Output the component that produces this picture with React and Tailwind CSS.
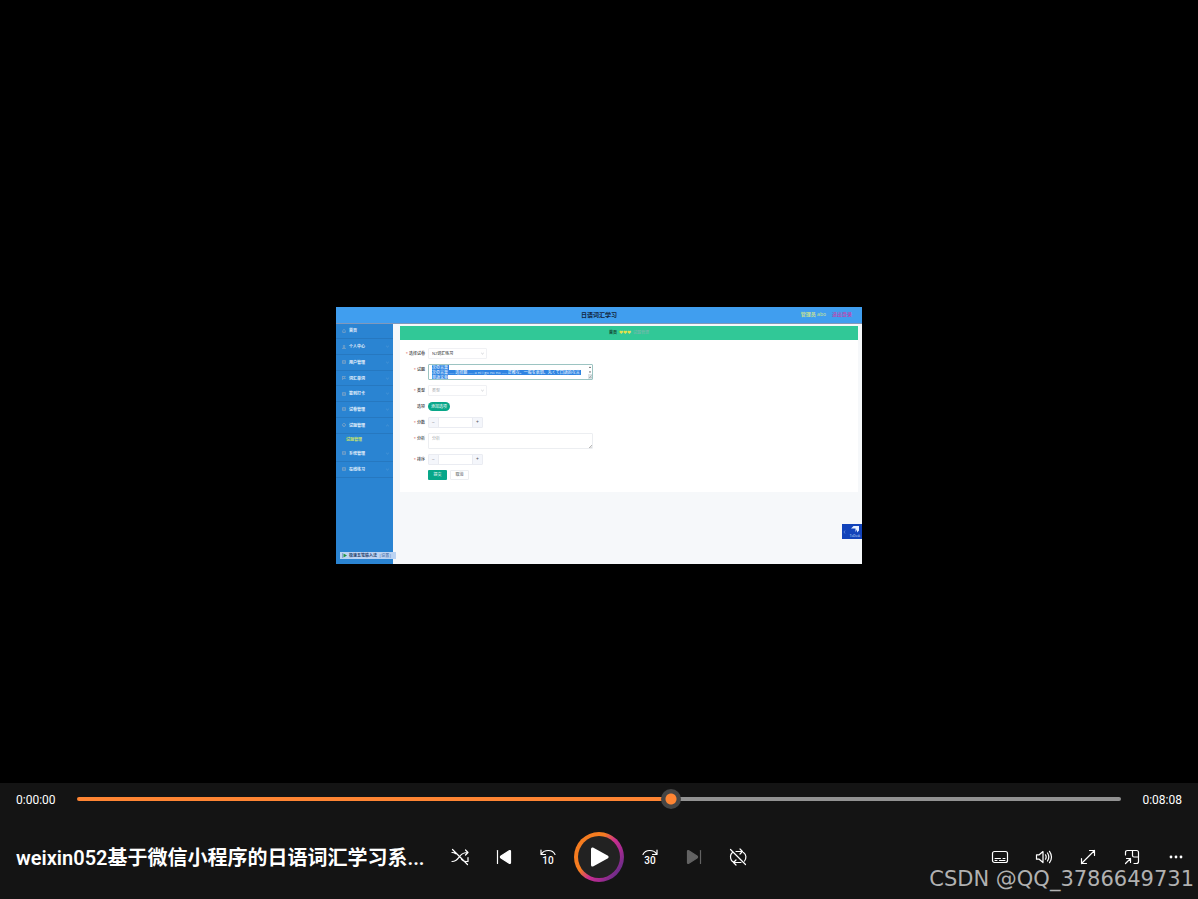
import { useEffect, useRef } from "react";

const menu = ["首页", "个人中心", "用户管理", "词汇单词", "签到打卡", "试卷管理", "试题管理"];
const menuTail = ["系统管理", "在线练习"];

function Icon({ children, className = "" }) {
  return (
    <svg
      width="20"
      height="20"
      viewBox="0 0 20 20"
      fill="none"
      stroke="currentColor"
      strokeWidth="1.2"
      strokeLinecap="round"
      strokeLinejoin="round"
      className={className}
      aria-hidden="true"
    >
      {children}
    </svg>
  );
}

function ControlButton({ label, children, disabled }) {
  return (
    <button
      type="button"
      aria-label={label}
      disabled={disabled}
      className="flex size-10 items-center justify-center text-white disabled:text-[#636363]"
    >
      <Icon>{children}</Icon>
    </button>
  );
}

function MenuRow({ label, glyph, arrow, up }) {
  return (
    <li className="flex flex-1 border-b border-[#2678c0]">
      <a href="#menu" className="flex flex-1 items-center gap-[3px] pr-1 pl-1.5">
        <svg width="4" height="4" viewBox="0 0 4 4" fill="none" stroke="#86a7c6" strokeWidth="0.7" aria-hidden="true">
          {glyph === 0 && <path d="M0.3 2 2 .4 3.7 2M.8 2v1.6h2.4V2" />}
          {glyph === 1 && <path d="M.4 3.6C.4 2.2 3.6 2.2 3.6 3.6ZM2 .4a.8.8 0 1 0 .01 0" />}
          {glyph === 2 && <path d="M.4.6h3.2v2.8H.4ZM.4 2h3.2" />}
          {glyph === 3 && <path d="M.6 0v4M.6.5h2.8L2.6 1.5l.8 1H.6" />}
          {glyph === 4 && <path d="M2 .4a1.6 1.6 0 1 0 .01 0M1.3 2l.6.6 1-1" />}
        </svg>
        <span className="flex-1">{label}</span>
        {arrow && (
          <svg width="3" height="3" viewBox="0 0 3 3" fill="none" stroke="#6ba6dc" strokeWidth="0.5" aria-hidden="true">
            <path d={up ? "M.3 2 1.5 1 2.7 2" : "M.3 1 1.5 2 2.7 1"} />
          </svg>
        )}
      </a>
    </li>
  );
}

function Field({ id, label, required = true, children }) {
  return (
    <div className="flex gap-[3px]">
      <label htmlFor={id} className="flex h-[11px] w-[25px] items-center justify-end gap-px font-medium text-[#2f3237]">
        {required && <span className="text-[#d9534f]">*</span>}
        {label}
      </label>
      {children}
    </div>
  );
}

function SelectBox({ id, value, muted }) {
  return (
    <div className="relative flex h-[11px] w-[59px]">
      <select
        id={id}
        className={
          "w-full appearance-none rounded-[1px] border border-[#f0f1f4] bg-white px-[3px] outline-none " +
          (muted ? "text-[#a4a7ad]" : "font-medium text-[#3a3d42]")
        }
      >
        <option>{value}</option>
      </select>
      <svg className="absolute top-1 right-[3px]" width="3" height="3" viewBox="0 0 3 3" fill="none" stroke="#b0b3ba" strokeWidth="0.6" aria-hidden="true">
        <path d="M.3 1 1.5 2 2.7 1" />
      </svg>
    </div>
  );
}

function NumberBox({ id }) {
  return (
    <div className="flex h-[11px] w-[55px] overflow-hidden rounded-[1px] border border-[#eaecf2]">
      <button type="button" aria-label="减少" className="w-2.5 border-r border-[#e9ebf1] bg-[#f4f6fb] text-[5px] leading-[8px] text-[#70747c]">
        −
      </button>
      <input id={id} className="min-w-0 flex-1 outline-none" />
      <button type="button" aria-label="增加" className="w-2.5 border-l border-[#e9ebf1] bg-[#f4f6fb] text-[5px] leading-[8px] text-[#50545c]">
        +
      </button>
    </div>
  );
}

function QuestionBox() {
  const ref = useRef(null);
  useEffect(() => {
    const el = ref.current;
    el.focus({ preventScroll: true });
    el.select();
    el.scrollTop = 0;
  }, []);
  return (
    <div className="relative flex h-4 w-[165px]">
      <textarea
        id="question"
        ref={ref}
        className="w-full resize-none overflow-hidden rounded-[1px] border border-[#9cc4c2] bg-white pr-2 pl-[3px] text-[4px] leading-[5px] font-medium text-[#2f86e0] outline-none selection:bg-[#2f84e2] selection:text-[#e4f1ff]"
        defaultValue={"次の言葉\n次の言葉 ---- 选择题 ---- a ni i go no no ---- 正確な、一般を表現、丸くて口語的な言\n単語文章"}
      />
      <svg className="absolute top-px right-px" width="4" height="14" viewBox="0 0 4 14" aria-hidden="true">
        <path d="M1 3 2 1.6 3 3ZM1 6.5 2 8 3 6.5Z" fill="#444" />
        <path d="M0 9h4v5H0Z" fill="#dce3e6" />
        <path d="M1 13 3.500 10.500M2.500 13l1-1" stroke="#777" strokeWidth=".5" />
      </svg>
    </div>
  );
}

function VideoFrame() {
  return (
    <div className="relative flex h-[257px] w-[526px] flex-col overflow-hidden bg-[#f6f8fa] text-[4px] leading-[5px]">
      <header className="grid h-4 grid-cols-3 items-center bg-[#409eef]">
        <h1 className="col-start-2 text-center text-[6px] leading-[8px] font-bold text-[#12253c]">日语词汇学习</h1>
        <div className="flex justify-end gap-1.5 pr-2.5 text-[5px] font-medium">
          <span className="text-[#d5e88a]">管理员 abo</span>
          <a href="#logout" className="text-[#c23fae]">退出登录</a>
        </div>
      </header>
      <div className="flex flex-1 border-t border-[#8098bb]">
        <nav className="flex w-[57px] flex-col bg-[#2a84d2] font-bold text-[#e5f1fc]">
          <ul className="flex h-[110px] flex-col">
            {menu.map((m, i) => (
              <MenuRow key={m} label={m} glyph={[0, 1, 2, 3, 2, 2, 4][i]} arrow={i > 0} up={i === 6} />
            ))}
          </ul>
          <a href="#questions" className="flex h-3 items-center pl-2.5 text-[#c9e36a]">试题管理</a>
          <ul className="flex h-8 flex-col">
            {menuTail.map((m) => (
              <MenuRow key={m} label={m} glyph={2} arrow />
            ))}
          </ul>
        </nav>
        <main className="flex-1 pt-0.5 pr-1 pl-[7px]">
          <div className="flex h-3.5 items-center justify-center gap-0.5 bg-[#31c897]">
            <span className="font-bold text-[#123f30]">首页</span>
            <span className="text-[#e6e04a]">♥♥♥</span>
            <span className="text-[#83b5b0]">试题管理</span>
          </div>
          <form className="flex flex-col gap-[5px] bg-white pt-2 pb-[11px]">
            <Field id="paper" label="选择试卷">
              <SelectBox id="paper" value="N2词汇练习" />
            </Field>
            <Field id="question" label="试题">
              <QuestionBox />
            </Field>
            <Field id="kind" label="类型">
              <SelectBox id="kind" value="类型" muted />
            </Field>
            <Field id="option" label="选项" required={false}>
              <div className="flex h-[11px] items-center">
                <button id="option" type="button" className="h-[9px] w-[22px] rounded-full bg-[#08a789] text-white">
                  添加选项
                </button>
              </div>
            </Field>
            <Field id="score" label="分数">
              <NumberBox id="score" />
            </Field>
            <Field id="analysis" label="分析">
              <div className="relative flex h-4 w-[165px]">
                <textarea
                  id="analysis"
                  placeholder="分析"
                  className="w-full resize-none overflow-hidden rounded-[1px] border border-[#eceef1] px-[3px] py-0.5 outline-none placeholder:text-[#a4a7ad]"
                />
                <svg className="absolute right-px bottom-px" width="3" height="3" viewBox="0 0 3 3" stroke="#888" strokeWidth=".6" aria-hidden="true">
                  <path d="M0 3 3 0M1.500 3 3 1.500" />
                </svg>
              </div>
            </Field>
            <Field id="order" label="排序">
              <NumberBox id="order" />
            </Field>
            <div className="flex h-[11px] gap-[3px] pl-7">
              <button type="button" className="h-2.5 w-[19px] rounded-[1px] bg-[#08a789] text-white">提交</button>
              <button type="button" className="h-2.5 w-[19px] rounded-[1px] border border-[#eceef1] text-[#45484e]">取消</button>
            </div>
          </form>
        </main>
      </div>
      <div className="absolute right-0 bottom-[25px] flex h-[15px] w-5 flex-col items-center bg-[#1243ba] pl-1.5 text-[3px] leading-[4px] text-[#d3e2ff]">
        <svg width="12" height="10" viewBox="0 0 12 10" aria-hidden="true">
          <path d="M2 4.500 4.500 2H10v4.500L8 8.500V5.500L6.500 8V4.500Z" fill="#e8f1ff" />
        </svg>
        ToDesk
        <svg className="absolute top-1.5 left-px" width="3" height="4" viewBox="0 0 3 4" fill="none" stroke="#7da2ee" strokeWidth=".6" aria-hidden="true">
          <path d="M2 .5 1 2l1 1.500" />
        </svg>
      </div>
      <div className="absolute bottom-[5px] left-1 flex h-[7px] w-14 items-center gap-0.5 bg-[#bcd4f3] px-0.5 font-bold text-[#28456f]">
        <svg width="5" height="5" viewBox="0 0 5 5" aria-hidden="true">
          <path d="M.5 0v5" stroke="#6585b5" strokeWidth=".6" />
          <path d="M1.500.5 5 2.500 1.500 4.500Z" fill="#229545" />
        </svg>
        <span className="whitespace-nowrap">极速五笔输入法</span>
        <span className="whitespace-nowrap text-[#6585b5]">|设置|</span>
      </div>
    </div>
  );
}

export default function App() {
  return (
    <div className="flex min-h-screen flex-col bg-black font-['Open_Sans','Noto_Sans_CJK_SC',sans-serif] text-white">
      <div className="flex flex-1 items-center justify-center pt-[87px]">
        <VideoFrame />
      </div>
      <footer className="relative bg-[#141414]">
        <div className="flex h-8 items-center px-4 font-['Roboto',sans-serif] text-xs">
          <span className="w-[61px] shrink-0 pt-px">0:00:00</span>
          <input
            type="range"
            aria-label="播放进度"
            min="0"
            max="10000"
            defaultValue="5703"
            className="h-1 min-w-0 flex-1 appearance-none rounded-full bg-[linear-gradient(to_right,#ff8533_57%,#929292_57%)] [&::-webkit-slider-thumb]:size-5 [&::-webkit-slider-thumb]:appearance-none [&::-webkit-slider-thumb]:rounded-full [&::-webkit-slider-thumb]:bg-[radial-gradient(circle,#ff8533_5px,#454545_6px)]"
          />
          <span className="w-[61px] shrink-0 pt-px text-right">0:08:08</span>
        </div>
        <div className="grid h-[84px] grid-cols-[1fr_auto_1fr] items-center">
          <h2 className="overflow-hidden pt-px pl-4 font-['Roboto','Noto_Sans_CJK_SC',sans-serif] text-xl font-semibold whitespace-nowrap">
            weixin052基于微信小程序的日语词汇学习系...
          </h2>
          <div className="flex items-center gap-1">
            <ControlButton label="随机播放已关闭">
              <path d="M2.500 2.500 17.500 17.500M2 14.500C6.500 14.500 8 11.500 10 9S14 5.500 17.500 5.500M15.500 3l2.500 2.500L15.500 8M2 5.500c1.500 0 2.700.4 3.700 1.200M11.500 12.300c1.200 1.500 2.500 2.200 4.500 2.200M18 10.500v4h-2.500" />
            </ControlButton>
            <ControlButton label="上一个">
              <path d="M3.500 3.500v13" />
              <path d="M16.500 4.300v11.400c0 .8-.8 1-1.300.6L7 11q-1.200-1 0-2l8.200-5.300c.6-.4 1.300-.1 1.300.6Z" fill="currentColor" />
            </ControlButton>
            <ControlButton label="后退 10 秒">
              <path d="M3 3v4.500h4.500M3.300 7.200C6 2.500 14.500 2 17 7.500" />
              <text x="10" y="17" textAnchor="middle" fontSize="10" fontWeight="500" fontFamily="Roboto" fill="currentColor" stroke="none">10</text>
            </ControlButton>
            <div className="flex w-[54px] justify-center">
              <button
                type="button"
                aria-label="播放"
                className="flex size-[50px] items-center justify-center rounded-full bg-[linear-gradient(125deg,#f57c20_38%,#c92f8f_55%,#a52a90_70%,#5b2d86_90%)] p-1"
              >
                <span className="flex size-full items-center justify-center rounded-full bg-[#222]">
                  <svg width="24" height="24" viewBox="0 0 24 24" aria-hidden="true">
                    <path d="M4 4v16q0 2 2 1.400L21 13.200q1.500-1.200 0-2.400L6 2.600Q4 2 4 4Z" fill="#fff" />
                  </svg>
                </span>
              </button>
            </div>
            <ControlButton label="前进 30 秒">
              <path d="M17 3v4.500h-4.500M16.700 7.200C14 2.500 5.500 2 3 7.500" />
              <text x="10" y="17" textAnchor="middle" fontSize="10" fontWeight="500" fontFamily="Roboto" fill="currentColor" stroke="none">30</text>
            </ControlButton>
            <ControlButton label="下一个" disabled>
              <path d="M16.500 3.500v13" />
              <path d="M3.500 4.300v11.400c0 .8.8 1 1.300.6L13 11q1.200-1 0-2L4.800 3.700c-.6-.4-1.300-.1-1.300.6Z" fill="currentColor" />
            </ControlButton>
            <ControlButton label="重复已关闭">
              <path d="M2.500 2.500 17.500 17.500M8 4.500h6M12 2l2.500 2.500L12 7M15.500 5.500C18.500 7.500 18.500 11.500 16.500 14M4.500 5.500C1.500 8 1.500 15.500 8 15.500h5M8 13l-2.500 2.500L8 18" />
            </ControlButton>
          </div>
          <div className="flex justify-end gap-1 pr-0.5">
            <ControlButton label="字幕">
              <rect x="2.500" y="4.500" width="15" height="11" rx="2" />
              <path d="M5 11.500h5.500M13 11.500h2M5 13.500h2M9.500 13.500H15" strokeWidth="1" />
            </ControlButton>
            <ControlButton label="音量">
              <path d="M2.500 7.800v4.400h2.700l3.800 3.300v-11L5.200 7.800ZM11.500 7.800q1.300 2.200 0 4.400M13.500 6q2.600 4 0 8M15.500 4.300q4 5.700 0 11.400" />
            </ControlButton>
            <ControlButton label="全屏">
              <path d="M3.500 16.500l13-13M11.500 3.500h5v5M3.500 11.500v5h5" />
            </ControlButton>
            <ControlButton label="迷你播放器">
              <path d="M3.500 8V5.500q0-2 2-2h9q2 0 2 2v9q0 2-2 2H12M10.500 3.500v5q0 1.500 1.500 1.500h4.500M3.500 16.500l5-5M4.500 11.500h4v4" />
            </ControlButton>
            <ControlButton label="更多">
              <g fill="currentColor" stroke="none">
                <circle cx="5" cy="10" r="1.400" />
                <circle cx="10" cy="10" r="1.400" />
                <circle cx="15" cy="10" r="1.400" />
              </g>
            </ControlButton>
          </div>
        </div>
        <span className="pointer-events-none absolute right-1 bottom-2 font-['DejaVu_Sans',sans-serif] text-[21px] leading-6 whitespace-nowrap text-[#b1b1b1]">
          CSDN @QQ_3786649731
        </span>
      </footer>
    </div>
  );
}
